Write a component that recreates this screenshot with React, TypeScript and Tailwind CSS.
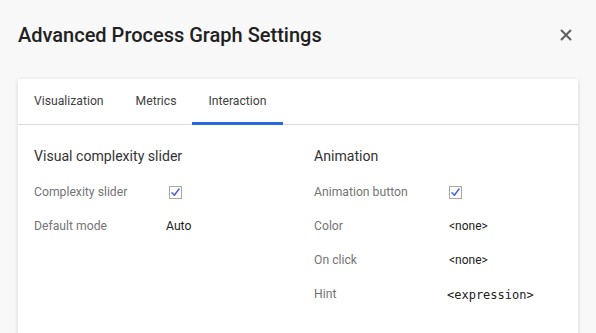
import { ReactNode } from "react";

const Check = () => (
  <span className="ml-[3px] flex h-[13px] w-[13px] items-center justify-center border border-[#a8a8a8] bg-white">
    <svg width="9" height="9" viewBox="0 0 9 9" fill="none">
      <path d="M1 4.8 L3.4 7.3 L8 1" stroke="#4a5fe6" strokeWidth="1.5" strokeLinecap="round" strokeLinejoin="round" />
    </svg>
  </span>
);

const Row = ({ label, children }: { label: string; children: ReactNode }) => (
  <div className="flex h-[34px] items-center">
    <span className="w-[132px] shrink-0 text-[12.2px] text-[#757575]">{label}</span>
    <div className="flex items-center text-[12.2px] text-[#212121]">{children}</div>
  </div>
);

const tabs = ["Visualization", "Metrics", "Interaction"];

export default function App() {
  return (
    <div className="h-[333px] w-[596px] overflow-hidden bg-[#f8f8f8] font-['Roboto',sans-serif]">
      <header className="flex h-[69px] items-center justify-between pl-[18px] pr-[22px]">
        <h1 className="text-[20px] font-medium text-[#212121]">Advanced Process Graph Settings</h1>
        <button className="flex h-4 w-4 items-center justify-center">
          <svg width="12" height="12" viewBox="0 0 12 12">
            <path d="M1 1 L11 11 M11 1 L1 11" stroke="#5f5f5f" strokeWidth="2" />
          </svg>
        </button>
      </header>

      <div className="mx-[18px] mt-[10px] h-[300px] bg-white shadow-[0_1px_4px_rgba(0,0,0,0.16)]">
        <nav className="flex h-[46px] border-b border-[#dcdcdc]">
          {tabs.map((t) => {
            const active = t === "Interaction";
            return (
              <div key={t} className="relative flex h-[45px] items-center px-4 text-[12.2px] text-[#424242]">
                {t}
                {active && <span className="absolute bottom-[-1px] left-0 right-0 h-[3px] bg-[#2469e0]" />}
              </div>
            );
          })}
        </nav>

        <div className="grid grid-cols-2 pt-[21px]">
          <section className="px-4">
            <h2 className="mb-[9px] h-5 text-[14.1px] leading-5 text-[#333]">Visual complexity slider</h2>
            <Row label="Complexity slider">
              <Check />
            </Row>
            <Row label="Default mode">Auto</Row>
          </section>
          <section className="px-4">
            <h2 className="mb-[9px] h-5 text-[14.1px] leading-5 text-[#333]">Animation</h2>
            <Row label="Animation button">
              <Check />
            </Row>
            <Row label="Color">
              <span className="ml-[3px] text-[12px]">&lt;none&gt;</span>
            </Row>
            <Row label="On click">
              <span className="ml-[3px] text-[12px]">&lt;none&gt;</span>
            </Row>
            <Row label="Hint">
              <span className="ml-[1px] mt-[2px] font-['DejaVu_Sans_Mono',monospace] text-[12px]">&lt;expression&gt;</span>
            </Row>
          </section>
        </div>
      </div>
    </div>
  );
}
